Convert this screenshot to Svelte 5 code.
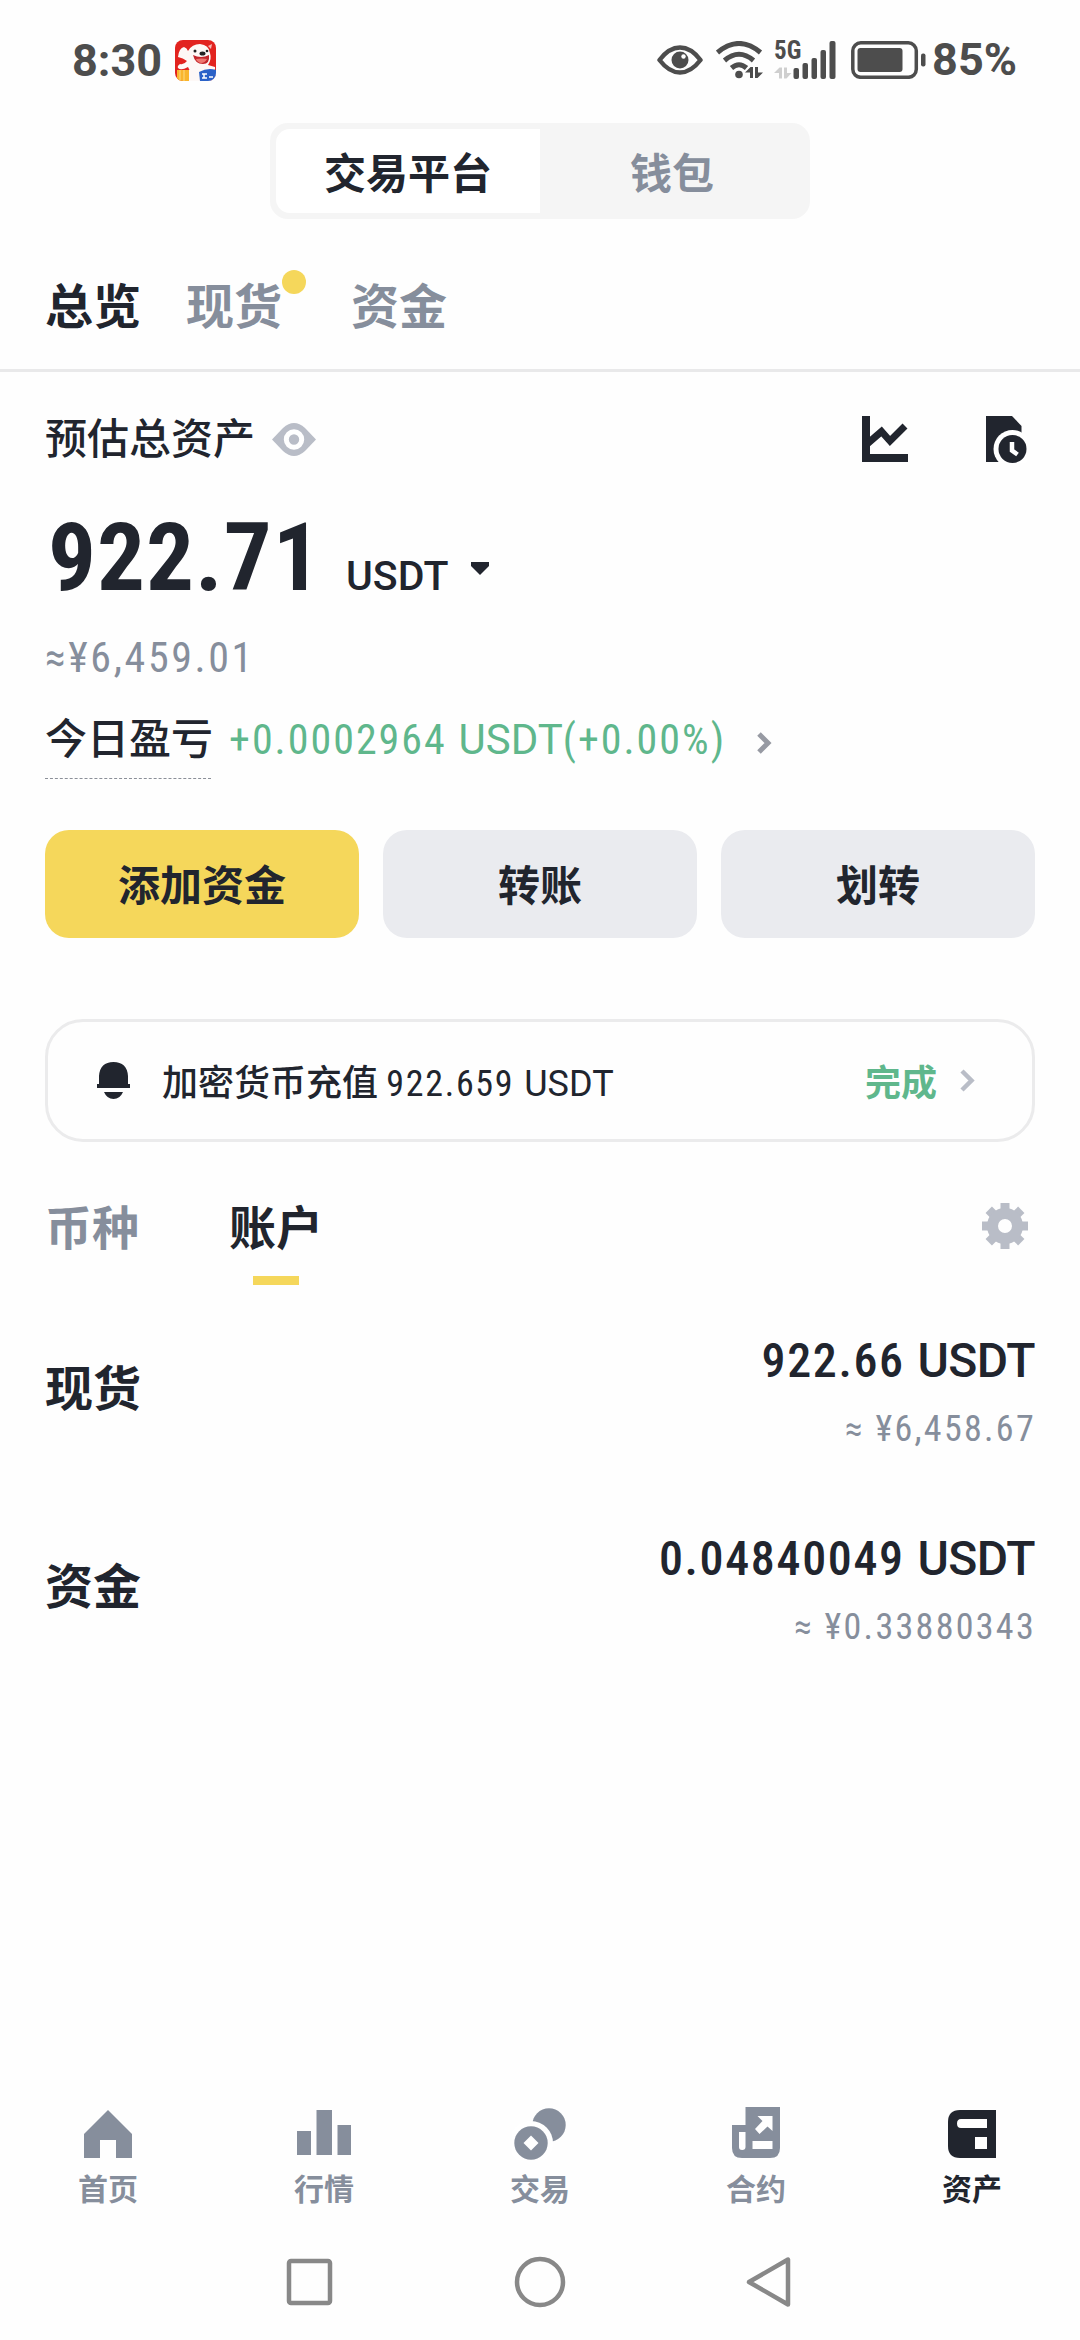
<script lang="ts">
	const actions = [
		{ label: "添加资金", primary: true },
		{ label: "转账", primary: false },
		{ label: "划转", primary: false },
	];

	const accounts = [
		{ name: "现货", amount: "922.66", fiat: "≈ ¥6,458.67" },
		{ name: "资金", amount: "0.04840049", fiat: "≈ ¥0.33880343" },
	];

	const nav = [
		{ id: "home", label: "首页" },
		{ id: "markets", label: "行情" },
		{ id: "trade", label: "交易" },
		{ id: "futures", label: "合约" },
		{ id: "assets", label: "资产" },
	];

	const teeth = [0, 45, 90, 135, 180, 225, 270, 315];

	let current = "assets";
</script>

<div class="screen">
	<header class="status">
		<span class="time">8:30</span>
		<svg class="app-icon" width="41" height="41" viewBox="0 0 41 41">
			<defs>
				<clipPath id="app-clip"><rect width="41" height="41" rx="8" /></clipPath>
			</defs>
			<g clip-path="url(#app-clip)">
				<rect width="41" height="41" fill="#e2231f" />
				<path d="M14 30H41V41H12Z" fill="#fdf8f6" />
				<path d="M3 17Q4 8 9 7Q12 8 13 11Q17 4 25 4Q34 5 35 13Q37 19 33 25L40 27Q41 31 36 31H15L13 27Q6 31 3 28Q2 26 5 24Q9 25 12 21Q8 18 3 17Z" fill="#fdf8f6" />
				<path d="M33 6l4-2-1 5z" fill="#f4b9b6" />
				<path d="M18 15Q26 19 34 15Q35 24 28 24Q20 24 18 15Z" fill="#c3262b" />
				<path d="M21 19Q27 18 32 19Q30 23 26 23Q22 22 21 19Z" fill="#ee7770" />
				<circle cx="20" cy="11" r="1.500" fill="#222" />
				<circle cx="32" cy="11" r="1.300" fill="#222" />
				<ellipse cx="27.500" cy="13.500" rx="3" ry="2" fill="#222" />
				<rect x="2" y="30" width="12" height="11" fill="#f9b52c" />
				<path d="M5 30v11M9 30v11" stroke="#fcd676" stroke-width="1.200" />
				<path d="M24 32Q33 27 41 30V41H25Z" fill="#2b62c8" />
				<path d="M27 34h5M29 34v4M27 38h5M34 37h4" stroke="#fff" stroke-width="1.500" />
			</g>
		</svg>
		<div class="indicators">
			<svg width="46" height="30" viewBox="0 0 46 30">
				<path d="M2.500 15Q12 2.500 23 2.500T43.500 15Q34 27.500 23 27.500T2.500 15Z" fill="none" stroke="#4d4d4d" stroke-width="4.500" stroke-linejoin="round" />
				<circle cx="23" cy="15" r="8.500" fill="#4d4d4d" />
				<circle cx="26.500" cy="11.500" r="2.200" fill="#fff" />
			</svg>
			<svg class="wifi" width="47" height="38" viewBox="0 0 47 38">
				<g fill="none" stroke="#4d4d4d" stroke-width="5">
					<path d="M1.500 11.500Q23 -6.500 44.500 11.500" />
					<path d="M8.500 19.500Q23 7 37.500 19.500" />
					<path d="M15.500 27Q23 20.500 30.500 27" />
				</g>
				<circle cx="23" cy="33.500" r="3.800" fill="#4d4d4d" />
				<path d="M29 31.500l5.500-5.500h2.500v11h-3v-5.500zM39 26h3v5.500h5l-5.500 5.500H39z" fill="#4d4d4d" />
			</svg>
			<div class="cell">
				<span class="net">5G</span>
				<svg width="62" height="38" viewBox="0 0 62 38">
					<path d="M0 32l5.500-5.500H8v11H5V32zM10 26.500h3V32h4.500L12.500 37.500H10z" fill="#cfcfcf" />
					<g fill="#4d4d4d">
						<rect x="19.500" y="27" width="5.500" height="11" rx="2" />
						<rect x="28.500" y="22" width="5.500" height="16" rx="2" />
						<rect x="37.500" y="17" width="5.500" height="21" rx="2" />
						<rect x="46.500" y="9" width="5.500" height="29" rx="2" />
						<rect x="55.500" y="0" width="6" height="38" rx="2" />
					</g>
				</svg>
			</div>
			<svg class="battery" width="75" height="38" viewBox="0 0 75 38">
				<rect x="1.800" y="1.800" width="63.500" height="34.500" rx="8" fill="none" stroke="#4d4d4d" stroke-width="3.500" />
				<rect x="6.500" y="7" width="45" height="24" rx="3" fill="#4d4d4d" />
				<rect x="70" y="12.500" width="4.500" height="13" rx="2" fill="#4d4d4d" />
			</svg>
			<span class="percent">85%</span>
		</div>
	</header>

	<div class="segment">
		<button class="seg on">交易平台</button>
		<button class="seg">钱包</button>
	</div>

	<div class="tabs">
		<span class="tab on">总览</span>
		<span class="tab">现货<i class="dot"></i></span>
		<span class="tab">资金</span>
	</div>

	<section class="overview">
		<div class="heading">
			<span>预估总资产</span>
			<svg class="eye" width="44" height="33" viewBox="0 0 44 33">
				<path d="M0 16.500L11 5Q22 -5 33 5L44 16.500L33 28Q22 38 11 28Z" fill="#b9bdc7" />
				<circle cx="22" cy="16.500" r="7.700" fill="none" stroke="#fff" stroke-width="5" />
			</svg>
			<div class="tools">
				<svg width="46" height="46" viewBox="0 0 46 46">
					<path d="M0 0H8V38H46V46H0Z" fill="#21252e" />
					<path d="M5 28L19.500 15.500L28 25L43 10" fill="none" stroke="#21252e" stroke-width="7" />
				</svg>
				<svg width="41" height="47" viewBox="0 0 41 47">
					<path d="M0 0H26L35.500 10V46H0Z" fill="#21252e" />
					<circle cx="26.500" cy="33" r="19" fill="#fff" />
					<circle cx="26.500" cy="33" r="14" fill="#21252e" />
					<path d="M26 26V34.500L31.500 38.500" fill="none" stroke="#fff" stroke-width="4.500" />
				</svg>
			</div>
		</div>

		<div class="balance">
			<span class="total">922.71</span>
			<span class="unit">USDT</span>
			<svg class="caret" width="18" height="13" viewBox="0 0 18 13">
				<path d="M0 0H18V4L9 13L0 4Z" fill="#21252e" />
			</svg>
		</div>
		<div class="fiat">≈¥6,459.01</div>

		<div class="pnl">
			<span class="pnl-label">今日盈亏</span>
			<span class="pnl-value">+0.0002964 <span class="coin">USDT</span>(+0.00%)</span>
			<svg width="15" height="22" viewBox="0 0 15 22">
				<path d="M2 2L11 11L2 20" fill="none" stroke="#979aa3" stroke-width="5" />
			</svg>
		</div>

		<div class="actions">
			{#each actions as action}
				<button class="action" class:primary={action.primary}>{action.label}</button>
			{/each}
		</div>

		<div class="notice">
			<svg width="33" height="37" viewBox="0 0 33 37">
				<path d="M0 26V22H2V14Q3 0 16.500 0T31 14V22H33V26Z" fill="#21252e" />
				<path d="M7 30H26Q23 37 16.500 37T7 30Z" fill="#21252e" />
			</svg>
			<span class="notice-text">加密货币充值 <b>922.659 <span class="coin">USDT</span></b></span>
			<span class="done">完成</span>
			<svg class="more" width="15" height="23" viewBox="0 0 15 23">
				<path d="M2 2L11.500 11.500L2 21" fill="none" stroke="#b9bdc7" stroke-width="4.500" />
			</svg>
		</div>
	</section>

	<div class="list-tabs">
		<span class="list-tab">币种</span>
		<span class="list-tab on">账户</span>
		<svg class="gear" width="46" height="46" viewBox="-23 -23 46 46">
			<g fill="#b9bdc7">
				{#each teeth as angle}
					<rect x="-4.500" y="-23" width="9" height="12" transform="rotate({angle})" />
				{/each}
			</g>
			<circle r="12.500" fill="none" stroke="#b9bdc7" stroke-width="11" />
		</svg>
	</div>

	<div class="accounts">
		{#each accounts as account}
			<div class="account">
				<span class="name">{account.name}</span>
				<div class="values">
					<span class="amount">{account.amount} <span class="coin">USDT</span></span>
					<span class="sub">{account.fiat}</span>
				</div>
			</div>
		{/each}
	</div>

	<nav class="bottom">
		{#each nav as item}
			<div class="nav-item" class:on={current === item.id}>
				<svg width="56" height="54" viewBox="0 0 56 54" fill="currentColor">
					{#if item.id === "home"}
						<path d="M28 4L52 28V52H36V34H20V52H4V28Z" />
					{:else if item.id === "markets"}
						<path d="M1 25H15V49H1ZM20.500 4H36V49H20.500ZM41.500 19H55V49H41.500Z" />
					{:else if item.id === "trade"}
						<circle cx="37" cy="19" r="16.700" />
						<circle cx="19" cy="37" r="22" fill="#fff" />
						<circle cx="19" cy="37" r="16.700" />
						<path d="M19 29.500L26.500 37L19 44.500L11.500 37Z" fill="#fff" />
					{:else if item.id === "futures"}
						<path d="M17.500 1H52V42Q52 52 42 52H14Q4 52 4 42V19H17.500Z" />
						<g fill="#fff">
							<path d="M11 26H17.500V41Q17.500 44 14.200 44T11 41Z" />
							<path d="M24.500 35H44.500V43H24.500Z" />
							<path d="M29.500 10H44.500V25L39.500 20.500L31.500 28L27 23L34.500 15Z" />
						</g>
					{:else}
						<path d="M16 4H52V52H16Q4 52 4 40V16Q4 4 16 4Z" />
						<path d="M17 13H43V22H17Q13 22 13 17.500T17 13ZM31 31H43V43H31Z" fill="#fff" />
					{/if}
				</svg>
				<span>{item.label}</span>
			</div>
		{/each}
	</nav>

	<div class="system">
		<svg width="52" height="52" viewBox="0 0 52 52"><rect x="5" y="5" width="41" height="42" rx="2" /></svg>
		<svg width="52" height="52" viewBox="0 0 52 52"><circle cx="26" cy="26" r="23" /></svg>
		<svg width="52" height="52" viewBox="0 0 52 52"><path d="M44 3.500V48.500L5 26Z" /></svg>
	</div>
</div>

<style>
:global(body) {
	background: #fefefe;
}

.screen {
	width: 1080px;
	height: 2340px;
	display: flex;
	flex-direction: column;
	background: #fefefe;
	color: #21252e;
	font-family: "Roboto Condensed", Roboto, "Noto Sans CJK SC", sans-serif;
	overflow: hidden;
}

svg {
	display: block;
	flex: none;
}

span {
	white-space: nowrap;
}

button {
	border: 0;
	padding: 0;
	font-family: inherit;
	color: inherit;
}

.coin {
	font-family: Roboto, sans-serif;
	letter-spacing: 0;
}

.status {
	height: 120px;
	margin-bottom: 3px;
	padding: 0 63px 0 72px;
	display: flex;
	align-items: center;
	color: #4d4d4d;
}

.time,
.percent {
	font: 700 45px/60px Roboto, sans-serif;
}

.time {
	padding-top: 1px;
}

.app-icon {
	margin-left: 13px;
}

.indicators {
	margin-left: auto;
	display: flex;
	align-items: center;
}

.wifi {
	margin-left: 13px;
}

.cell {
	margin-left: 11px;
	position: relative;
}

.net {
	position: absolute;
	left: 0;
	top: -2px;
	font-size: 25px;
	line-height: 24px;
	font-weight: 700;
}

.battery {
	margin: 0 6px 0 15px;
}

.segment {
	width: 528px;
	height: 84px;
	padding: 6px;
	margin: 0 auto;
	display: flex;
	flex: none;
	border-radius: 18px;
	background: #f5f5f5;
}

.seg {
	flex: 1;
	background: none;
	padding-bottom: 2px;
	color: #868e9c;
	font-size: 42px;
	font-weight: 700;
}

.seg.on {
	background: #fff;
	color: #21252e;
	border-radius: 14px 0 0 14px;
}

.tabs {
	height: 123px;
	padding: 27px 45px 0;
	border-bottom: 3px solid #e9e9ea;
	display: flex;
	align-items: center;
	gap: 45px;
}

.tab {
	display: flex;
	font-size: 48px;
	line-height: 62px;
	font-weight: 700;
	color: #868e9c;
}

.tab.on {
	color: #21252e;
}

.dot {
	width: 24px;
	height: 24px;
	margin-top: -7px;
	border-radius: 50%;
	background: #f5d75b;
}

.overview {
	padding: 0 45px;
}

.heading {
	height: 134px;
	display: flex;
	align-items: center;
	font-size: 42px;
	line-height: 60px;
	font-weight: 500;
}

.heading span {
	padding-top: 2px;
}

.eye {
	margin-left: 17px;
}

.tools {
	margin-left: auto;
	padding-right: 8px;
	display: flex;
	gap: 78px;
}

.balance {
	height: 98px;
	padding: 2px 0 0 3px;
	display: flex;
	align-items: baseline;
}

.total {
	font-size: 95px;
	line-height: 100px;
	font-weight: 700;
	width: 298px;
	letter-spacing: 1px;
}

.unit {
	font-family: Roboto, sans-serif;
	font-size: 41px;
	font-weight: 500;
}

.caret {
	margin-left: 23px;
	position: relative;
	top: -15px;
}

.fiat {
	font-size: 42px;
	line-height: 104px;
	color: #868e9c;
	letter-spacing: 2.6px;
}

.pnl {
	height: 69px;
	display: flex;
	align-items: flex-start;
	font-size: 42px;
	line-height: 60px;
}

.pnl-label {
	height: 68px;
	width: 166px;
	border-bottom: 1px dashed #8b8f98;
	font-weight: 500;
}

.pnl-value {
	width: 528px;
	margin-left: 18px;
	color: #5fb78c;
	letter-spacing: 2px;
}

.pnl svg {
	margin-top: 22px;
}

.actions {
	margin-top: 51px;
	display: flex;
	gap: 24px;
}

.action {
	flex: 1;
	height: 108px;
	padding-bottom: 4px;
	border-radius: 24px;
	background: #eaebef;
	font-size: 42px;
	font-weight: 700;
}

.action.primary {
	background: #f5d75b;
}

.notice {
	height: 117px;
	margin-top: 81px;
	padding: 0 57px 0 49px;
	display: flex;
	align-items: center;
	border: 3px solid #ebebec;
	border-radius: 38px;
	font-size: 36px;
	line-height: 50px;
}

.notice-text {
	margin-left: 32px;
	padding-top: 6px;
	font-weight: 500;
}

.notice-text b {
	font-weight: 400;
	letter-spacing: 1.7px;
}

.done {
	margin-left: auto;
	padding-top: 6px;
	color: #5fb78c;
	font-weight: 700;
}

.more {
	margin-left: 23px;
}

.list-tabs {
	height: 145px;
	padding: 0 52px 0 45px;
	display: flex;
	align-items: flex-end;
}

.list-tab {
	height: 89px;
	margin-right: 90px;
	font-size: 47px;
	line-height: 62px;
	font-weight: 700;
	color: #868e9c;
}

.list-tab.on {
	color: #21252e;
}

.list-tab.on::after {
	content: "";
	display: block;
	width: 46px;
	height: 9px;
	margin: 16px auto 0;
	background: #f5d75b;
}

.gear {
	margin: 0 0 38px auto;
}

.account {
	height: 198px;
	padding: 0 45px;
	display: flex;
	align-items: center;
	justify-content: space-between;
}

.name {
	padding-bottom: 2px;
	font-size: 48px;
	font-weight: 700;
}

.values {
	padding-top: 18px;
	display: flex;
	flex-direction: column;
	align-items: flex-end;
}

.amount {
	font-size: 48px;
	line-height: 68px;
	font-weight: 500;
	letter-spacing: 1.65px;
}

.amount .coin {
	letter-spacing: -0.6px;
}

.sub {
	margin-right: -1px;
	font-size: 36px;
	line-height: 68px;
	color: #868e9c;
	letter-spacing: 2.3px;
}

.bottom {
	margin-top: auto;
	display: flex;
}

.nav-item {
	flex: 1;
	display: flex;
	flex-direction: column;
	align-items: center;
	color: #868e9c;
	font-size: 30px;
	line-height: 40px;
	font-weight: 700;
}

.nav-item span {
	margin-top: 10px;
}

.nav-item.on {
	color: #21252e;
}

.system {
	height: 116px;
	margin-top: 14px;
	display: flex;
	justify-content: center;
	align-items: center;
	gap: 178px;
}

.system svg {
	fill: none;
	stroke: #888;
	stroke-width: 4.5;
	stroke-linejoin: round;
}
</style>
